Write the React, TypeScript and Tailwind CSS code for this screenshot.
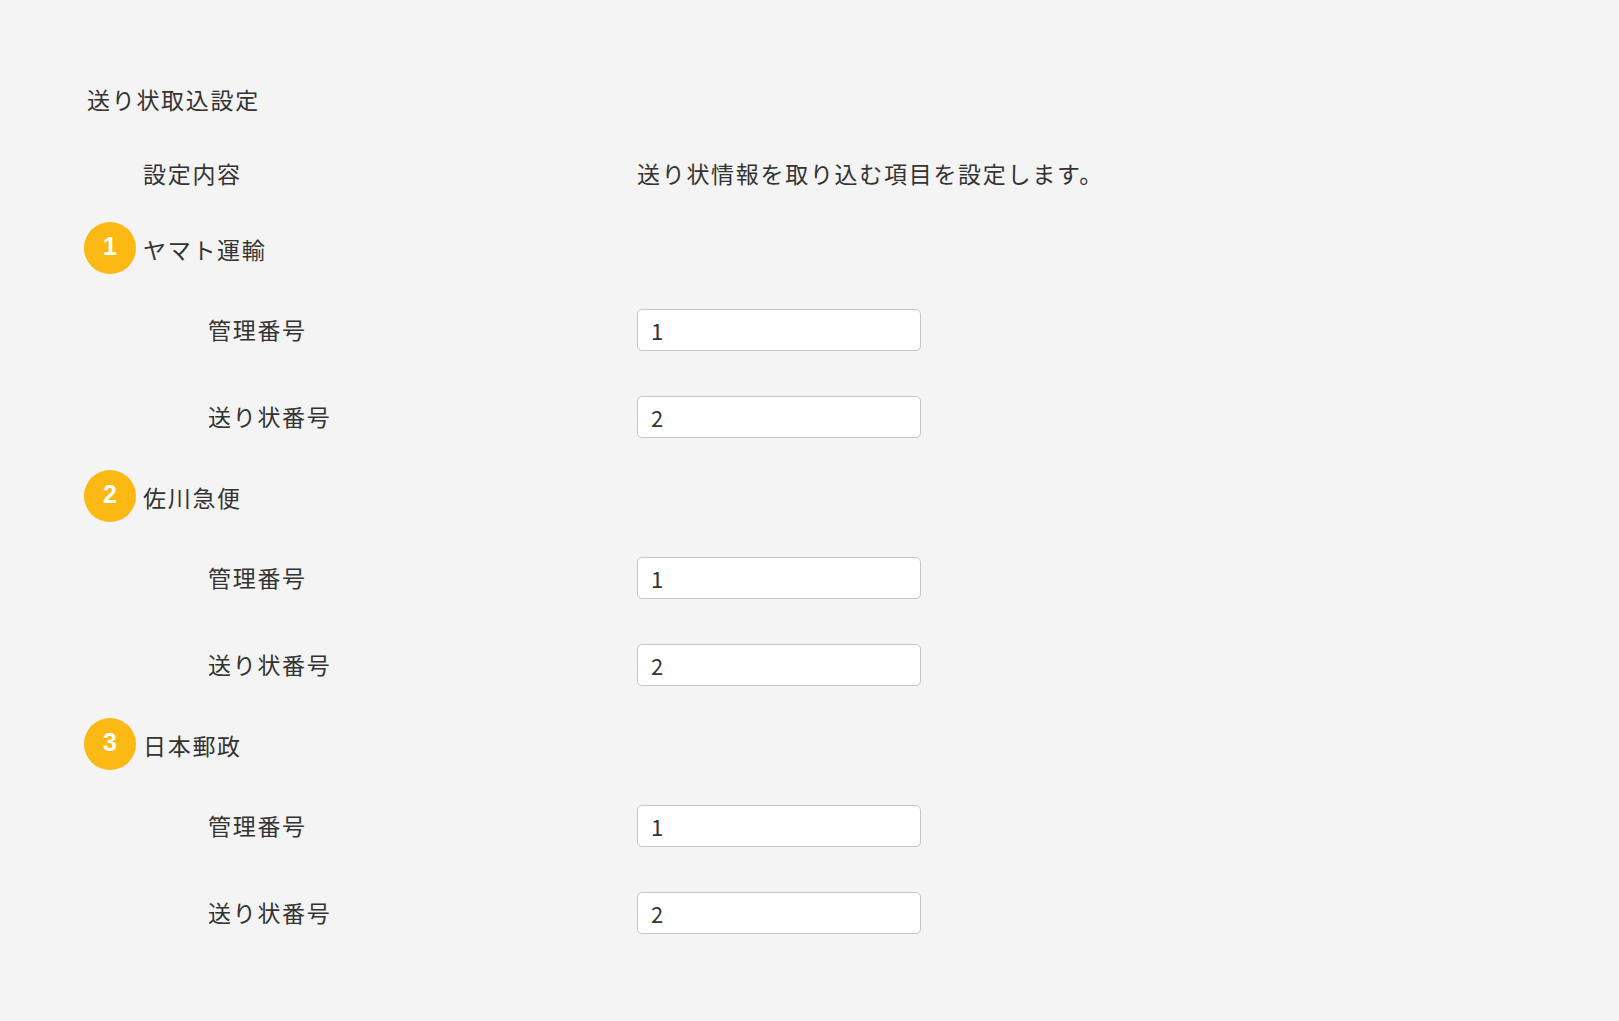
import React from "react";

const carriers = [
  { no: "1", name: "ヤマト運輸" },
  { no: "2", name: "佐川急便" },
  { no: "3", name: "日本郵政" },
];

function FieldRow({ label, value }: { label: string; value: string }) {
  return (
    <div className="flex h-[87px] items-center">
      <div className="w-[553px] pl-[124px]">{label}</div>
      <input
        defaultValue={value}
        className="h-[42px] w-[284px] rounded-[5px] border border-[#c6c6c6] bg-white px-[13px] text-[22px] tracking-normal text-[#333] outline-none"
      />
    </div>
  );
}

export default function App() {
  return (
    <div
      className="min-h-screen w-full bg-[#f4f4f4] pl-[84px] pt-[62px] text-[23px] leading-[1.3] tracking-[1.7px] text-[#333]"
      style={{ fontFamily: '"Noto Sans CJK JP", "Noto Sans", sans-serif' }}
    >
      <div className="flex h-[75px] items-center">
        <div className="mt-[1px] ml-[3px]">送り状取込設定</div>
      </div>
      <div className="flex h-[75px] items-center">
        <div className="mb-[2px] w-[553px] pl-[59px]">設定内容</div>
        <div className="mb-[2px]">送り状情報を取り込む項目を設定します。</div>
      </div>
      {carriers.map((c) => (
        <div key={c.no}>
          <div className="flex h-[74px] items-start">
            <div className="mt-[10px] flex items-center">
              <div
                className="flex h-[52px] w-[52px] items-center justify-center rounded-full bg-[#fdb913] pb-[3px] text-[25px] font-semibold tracking-normal text-white"
                style={{ fontFamily: '"Liberation Sans", Arial, sans-serif' }}
              >
                {c.no}
              </div>
              <div className="ml-[7px] mt-[3px]">{c.name}</div>
            </div>
          </div>
          <FieldRow label="管理番号" value="1" />
          <FieldRow label="送り状番号" value="2" />
        </div>
      ))}
    </div>
  );
}
